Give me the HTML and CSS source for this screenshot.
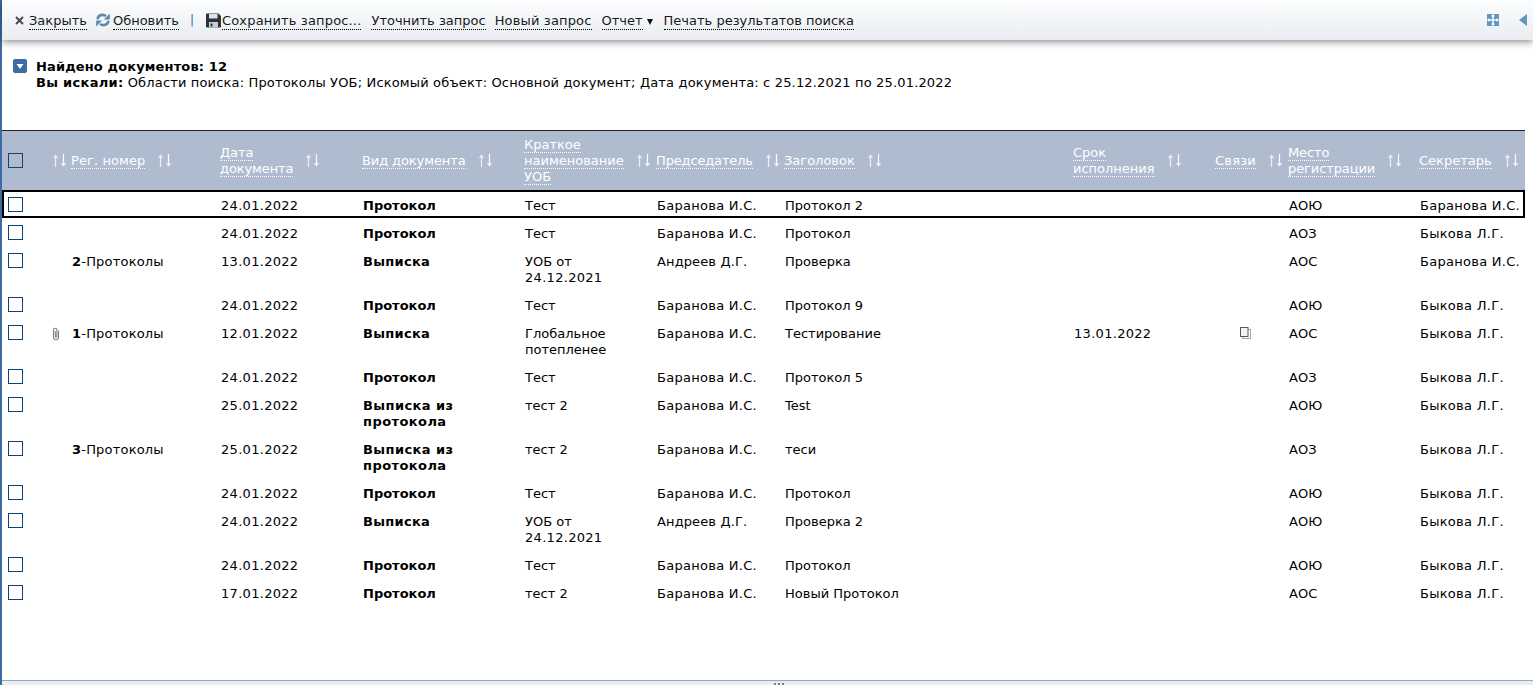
FILE: index.html
```html
<!DOCTYPE html>
<html lang="ru">
<head>
<meta charset="utf-8">
<title>Результаты поиска</title>
<link rel="stylesheet" href="styles.css">
</head>
<body>
<svg class="sprite" width="0" height="0" aria-hidden="true"><defs>
  <symbol id="sort" viewBox="0 0 14 13"><path d="M2.500 13V2M.5 4L2.500 1.500 4.500 4" fill="none" stroke="#f4eef4" stroke-width="1.200"/><path d="M10.500 0V11M8.500 9L10.500 11.500 12.500 9" fill="none" stroke="#f8fafc" stroke-width="1.200"/></symbol>
</defs></svg>
<div class="page">
  <header class="toolbar">
    <svg class="ic-x" width="9" height="9" viewBox="0 0 9 9"><path d="M1 1l7 7M8 1L1 8" stroke="#444" stroke-width="1.800"/></svg><a class="tool tool-close">Закрыть</a>
    <svg class="ic-refresh" width="14" height="14" viewBox="0 0 14 14"><path d="M1.500 6.200C2 3.500 4.200 1.900 6.600 1.900c1.300 0 2.400.4 3.300 1.200" fill="none" stroke="#5a89ae" stroke-width="2.600"/><path d="M13.800 .6v6h-6z" fill="#5a89ae"/><path d="M12.500 7.800C12 10.500 9.800 12.100 7.400 12.100c-1.300 0-2.400-.4-3.300-1.200" fill="none" stroke="#5a89ae" stroke-width="2.600"/><path d="M.2 13.400v-6h6z" fill="#5a89ae"/></svg><a class="tool tool-refresh">Обновить</a>
    <span class="sep">|</span>
    <svg class="ic-save" width="15" height="15" viewBox="0 0 15 15"><path d="M0 1.500A1 1 0 0 1 1 .5h11.500L15 3v10.500a1 1 0 0 1-1 1H1a1 1 0 0 1-1-1z" fill="#2e3238"/><rect x="3" y="1" width="8.500" height="4.500" fill="#dfe3e8"/><rect x="3" y="9" width="9" height="5.500" fill="#c9ced4"/><rect x="4.500" y="10.500" width="2" height="3" fill="#2e3238"/></svg><a class="tool tool-save">Сохранить запрос...</a>
    <a class="tool tool-refine">Уточнить запрос</a>
    <a class="tool tool-new">Новый запрос</a>
    <a class="tool tool-report">Отчет</a><span class="caret"></span>
    <a class="tool tool-print">Печать результатов поиска</a>
    <span class="toolbar-right">
      <svg width="12" height="12" viewBox="0 0 12 12"><rect width="12" height="12" fill="#6096c0"/><path d="M6 1.500V10.500M1.500 6H10.500" stroke="#fff" stroke-width="1.200"/><path d="M6 4l2 2-2 2-2-2zM6 0l1.800 2L6 3.500 4.200 2zM6 12l1.800-2L6 8.500 4.200 10zM0 6l2-1.800L3.500 6 2 7.800zM12 6l-2-1.800L8.500 6 10 7.800z" fill="#fff"/></svg>
      <svg class="ic-left" width="8" height="12" viewBox="0 0 8 12"><path d="M8 0v12L0 6z" fill="#5f96c2"/></svg>
    </span>
  </header>

  <main class="content">
    <section class="summary">
      <span class="toggle"><svg width="14" height="14" viewBox="0 0 14 14"><rect width="14" height="14" rx="2" fill="#3e6ba5"/><path d="M3.500 5h7L7 10z" fill="#fff"/></svg></span>
      <div class="summary-text">
        <div class="found">Найдено документов: 12</div>
        <div><b>Вы искали:</b> Области поиска: Протоколы УОБ; Искомый объект: Основной документ; Дата документа: с 25.12.2021 по 25.01.2022</div>
      </div>
    </section>

    <table class="grid">
      <colgroup>
        <col class="c-check"><col class="c-clip"><col class="c-reg"><col class="c-date"><col class="c-kind"><col class="c-short"><col class="c-chair"><col class="c-title"><col class="c-due"><col class="c-links"><col class="c-place"><col class="c-secr">
      </colgroup>
      <thead>
        <tr>
          <th class="th-check"><span class="box"></span></th>
          <th class="th-sort"><svg class="sort"><use href="#sort"/></svg></th>
          <th><div class="hd"><div><span class="lbl">Рег. номер</span></div><svg class="sort"><use href="#sort"/></svg></div></th>
          <th><div class="hd"><div><span class="lbl">Дата<br>документа</span></div><svg class="sort"><use href="#sort"/></svg></div></th>
          <th><div class="hd"><div><span class="lbl">Вид документа</span></div><svg class="sort"><use href="#sort"/></svg></div></th>
          <th><div class="hd"><div><span class="lbl">Краткое<br>наименование<br>УОБ</span></div><svg class="sort"><use href="#sort"/></svg></div></th>
          <th><div class="hd"><div><span class="lbl">Председатель</span></div><svg class="sort"><use href="#sort"/></svg></div></th>
          <th><div class="hd"><div><span class="lbl">Заголовок</span></div><svg class="sort"><use href="#sort"/></svg></div></th>
          <th><div class="hd"><div><span class="lbl">Срок<br>исполнения</span></div><svg class="sort"><use href="#sort"/></svg></div></th>
          <th><div class="hd"><div><span class="lbl">Связи</span></div><svg class="sort"><use href="#sort"/></svg></div></th>
          <th><div class="hd"><div><span class="lbl">Место<br>регистрации</span></div><svg class="sort"><use href="#sort"/></svg></div></th>
          <th><div class="hd"><div><span class="lbl">Секретарь</span></div><svg class="sort"><use href="#sort"/></svg></div></th>
        </tr>
      </thead>
      <tbody>
        <tr class="selected"><td class="td-check"><span class="box"></span></td><td></td><td></td><td>24.01.2022</td><td><b>Протокол</b></td><td>Тест</td><td>Баранова И.С.</td><td>Протокол 2</td><td></td><td></td><td>АОЮ</td><td>Баранова И.С.</td></tr>
        <tr><td class="td-check"><span class="box"></span></td><td></td><td></td><td>24.01.2022</td><td><b>Протокол</b></td><td>Тест</td><td>Баранова И.С.</td><td>Протокол</td><td></td><td></td><td>АОЗ</td><td>Быкова Л.Г.</td></tr>
        <tr><td class="td-check"><span class="box"></span></td><td></td><td><b>2</b>-Протоколы</td><td>13.01.2022</td><td><b class="mid">Выписка</b></td><td>УОБ от<br><span class="dt">24.12.2021</span></td><td class="tight">Андреев Д.Г.</td><td>Проверка</td><td></td><td></td><td>АОС</td><td>Баранова И.С.</td></tr>
        <tr><td class="td-check"><span class="box"></span></td><td></td><td></td><td>24.01.2022</td><td><b>Протокол</b></td><td>Тест</td><td>Баранова И.С.</td><td>Протокол 9</td><td></td><td></td><td>АОЮ</td><td>Быкова Л.Г.</td></tr>
        <tr><td class="td-check"><span class="box"></span></td><td class="td-clip"><svg width="10" height="14" viewBox="0 0 10 14"><path d="M7.500 3.500v6.800a2.500 2.500 0 0 1-5 0V3a1.700 1.700 0 0 1 3.400 0v6.500a.8.8 0 0 1-1.600 0V4" fill="none" stroke="#7d838a" stroke-width="1.100"/></svg></td><td><b>1</b>-Протоколы</td><td>12.01.2022</td><td><b class="mid">Выписка</b></td><td>Глобальное<br>потепленее</td><td>Баранова И.С.</td><td>Тестирование</td><td class="dt">13.01.2022</td><td class="td-link"><svg width="11" height="12" viewBox="0 0 11 12"><rect x="2.500" y="2.500" width="8" height="9" fill="#fff" stroke="#a4a9b0"/><rect x=".5" y=".5" width="7.500" height="9" fill="#f2f3f5" stroke="#4f5a68"/></svg></td><td>АОС</td><td>Быкова Л.Г.</td></tr>
        <tr><td class="td-check"><span class="box"></span></td><td></td><td></td><td>24.01.2022</td><td><b>Протокол</b></td><td>Тест</td><td>Баранова И.С.</td><td>Протокол 5</td><td></td><td></td><td>АОЗ</td><td>Быкова Л.Г.</td></tr>
        <tr><td class="td-check"><span class="box"></span></td><td></td><td></td><td>25.01.2022</td><td><b class="wide">Выписка из<br>протокола</b></td><td>тест 2</td><td>Баранова И.С.</td><td>Test</td><td></td><td></td><td>АОЮ</td><td>Быкова Л.Г.</td></tr>
        <tr><td class="td-check"><span class="box"></span></td><td></td><td><b>3</b>-Протоколы</td><td>25.01.2022</td><td><b class="wide">Выписка из<br>протокола</b></td><td>тест 2</td><td>Баранова И.С.</td><td>теси</td><td></td><td></td><td>АОЗ</td><td>Быкова Л.Г.</td></tr>
        <tr><td class="td-check"><span class="box"></span></td><td></td><td></td><td>24.01.2022</td><td><b>Протокол</b></td><td>Тест</td><td>Баранова И.С.</td><td>Протокол</td><td></td><td></td><td>АОЮ</td><td>Быкова Л.Г.</td></tr>
        <tr><td class="td-check"><span class="box"></span></td><td></td><td></td><td>24.01.2022</td><td><b class="mid">Выписка</b></td><td>УОБ от<br><span class="dt">24.12.2021</span></td><td class="tight">Андреев Д.Г.</td><td>Проверка 2</td><td></td><td></td><td>АОЮ</td><td>Быкова Л.Г.</td></tr>
        <tr><td class="td-check"><span class="box"></span></td><td></td><td></td><td>24.01.2022</td><td><b>Протокол</b></td><td>Тест</td><td>Баранова И.С.</td><td>Протокол</td><td></td><td></td><td>АОЮ</td><td>Быкова Л.Г.</td></tr>
        <tr><td class="td-check"><span class="box"></span></td><td></td><td></td><td>17.01.2022</td><td><b>Протокол</b></td><td>тест 2</td><td>Баранова И.С.</td><td>Новый Протокол</td><td></td><td></td><td>АОС</td><td>Быкова Л.Г.</td></tr>
      </tbody>
    </table>
  </main>

  <footer class="splitter"><span class="dots"><i></i><i></i><i></i></span></footer>
</div>
</body>
</html>
```

FILE: styles.css
```css
* { box-sizing: border-box; }
html, body { margin: 0; height: 100%; overflow: hidden; }
body { font-family: "DejaVu Sans", Verdana, sans-serif; font-size: 13px; line-height: 16px; color: #000; background: #fff; }
.sprite { position: absolute; }
.page { height: 100vh; display: flex; flex-direction: column; border-left: 2px solid #3e6ba5; }
.toolbar { height: 40px; flex: none; display: flex; align-items: center; padding-left: 13px; background: linear-gradient(#fcfdfe, #e9edf1); box-shadow: 0 2px 7px rgba(0,0,0,.45); position: relative; z-index: 1; }
.tool { border-bottom: 1px dotted #000; height: 17px; color: #1a1a1a; margin-top: 3px; white-space: nowrap; }
.ic-x { margin-right: 5px; }
.ic-refresh { margin-left: 9px; margin-right: 3px; }
.sep { margin: 0 12px 0 11px; color: #3e6ba5; font-size: 12px; }
.ic-save { margin-right: 1px; }
.tool-save { letter-spacing: .16px; }
.tool-refine { margin-left: 10px; }
.tool-new { margin-left: 9px; letter-spacing: .16px; }
.tool-report { margin-left: 10px; }
.caret { width: 0; height: 0; margin: 3px 0 0 4px; border-left: 3.500px solid transparent; border-right: 3.500px solid transparent; border-top: 6px solid #111; }
.tool-print { margin-left: 11px; }
.toolbar-right { margin-left: auto; margin-right: 6px; display: flex; align-items: center; }
.ic-left { margin-left: 20px; }
.content { flex: 1; min-height: 0; }
.summary { height: 90px; display: flex; padding: 19px 0 0 11px; letter-spacing: .16px; }
.toggle { width: 14px; height: 14px; margin-right: 9px; }
.toggle svg { display: block; }
.found { font-weight: bold; letter-spacing: .135px; }
.summary b { letter-spacing: .3px; }
.grid { width: 1523px; table-layout: fixed; border-collapse: separate; border-spacing: 0; }
.c-check { width: 44px; } .c-clip { width: 21px; } .c-reg { width: 149px; } .c-date { width: 142px; }
.c-kind { width: 162px; } .c-short { width: 132px; } .c-chair { width: 128px; } .c-title { width: 289px; }
.c-due { width: 142px; } .c-links { width: 73px; } .c-place { width: 131px; } .c-secr { width: 110px; }
.grid thead th { height: 60px; background: #afbccf; border-top: 1px solid #222; padding: 0 0 0 4px; font-weight: normal; text-align: left; color: #fff; vertical-align: middle; white-space: nowrap; }
.grid td { padding: 8px 0 4px 5px; vertical-align: top; white-space: nowrap; }
.grid td:nth-child(3) { letter-spacing: .2px; }
.grid td:nth-child(4), .dt { letter-spacing: .3px; }
.grid td:nth-child(7), .grid td:nth-child(12) { letter-spacing: .28px; }
.grid td.tight { letter-spacing: .12px; }
.mid { letter-spacing: .3px; }
.wide { letter-spacing: .42px; }
.hd { display: flex; align-items: center; }
.lbl { border-bottom: 1px dotted #fff; }
th:nth-child(3) .lbl { letter-spacing: .1px; }
th:nth-child(4) .lbl, th:nth-child(5) .lbl, th:nth-child(11) .lbl { letter-spacing: -.1px; }
th:nth-child(7) .lbl { letter-spacing: -.15px; }
th:nth-child(10) .lbl { letter-spacing: .2px; }
.sort { display: block; flex: none; width: 14px; height: 13px; margin-left: 13px; }
.grid .th-sort { padding: 0; }
.th-sort .sort { margin-left: 7px; }
.box { display: block; width: 15px; height: 15px; border: 1px solid #0f4477; }
.grid .th-check { padding-left: 6px; }
.grid .td-check { padding: 7px 0 0 6px; }
.td-check .box { background: #fff; }
.grid .td-clip { padding: 9px 0 0 5px; }
.td-clip svg { display: block; }
.grid .td-link { padding: 9px 0 0 29px; letter-spacing: 0; }
.td-link svg { display: block; }
.selected { outline: 2px solid #000; outline-offset: -2px; }
.splitter { height: 5px; flex: none; border-top: 1px solid #95a8bf; background: #e8edf2; display: flex; justify-content: center; }
.dots { display: flex; gap: 2px; padding-top: 2px; margin-left: 23px; }
.dots i { display: block; width: 2px; height: 2px; background: #717b89; }
```
